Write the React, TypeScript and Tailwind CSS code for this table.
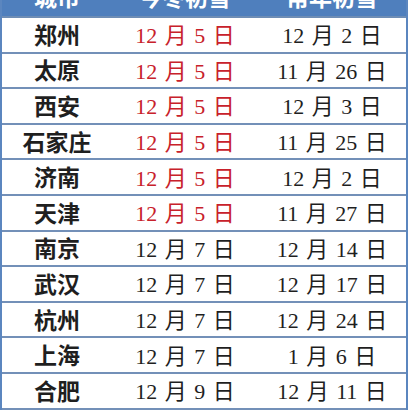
const rows: [string, string, string, boolean][] = [
  ["郑州", "12 月 5 日", "12 月 2 日", true],
  ["太原", "12 月 5 日", "11 月 26 日", true],
  ["西安", "12 月 5 日", "12 月 3 日", true],
  ["石家庄", "12 月 5 日", "11 月 25 日", true],
  ["济南", "12 月 5 日", "12 月 2 日", true],
  ["天津", "12 月 5 日", "11 月 27 日", true],
  ["南京", "12 月 7 日", "12 月 14 日", false],
  ["武汉", "12 月 7 日", "12 月 17 日", false],
  ["杭州", "12 月 7 日", "12 月 24 日", false],
  ["上海", "12 月 7 日", "1 月 6 日", false],
  ["合肥", "12 月 9 日", "12 月 11 日", false],
];

const font = { fontFamily: '"Liberation Serif", "Noto Sans CJK SC", serif' };

export default function App() {
  return (
    <div className="w-[410px] h-[410px] overflow-hidden bg-white" style={font}>
      <div className="w-[408px] border-x-2 border-[#5b86bf]">
        {/* header row, its top half runs off the picture */}
        <div className="mt-[-18px] h-[36px] grid grid-cols-[110px_146px_1fr] items-center bg-[#4f7fbd] text-white font-bold text-[23px] border-b-2 border-[#6e8db5]">
          <div className="text-center">城市</div>
          <div className="text-center">今冬初雪</div>
          <div className="text-center">常年初雪</div>
        </div>
        {rows.map(([city, now, usual, red]) => (
          <div
            key={city}
            className="h-[35.6px] grid grid-cols-[110px_146px_1fr] items-center border-b-2 border-[#7390b8] text-[22px] text-[#1f1f1f] [word-spacing:2px]"
          >
            <div className="text-center font-bold text-[23px] leading-none pt-[3px]">{city}</div>
            <div className={red ? "text-center leading-none pt-[3px] text-[#c8212b]" : "text-center leading-none pt-[3px]"}>{now}</div>
            <div className="text-center leading-none pt-[3px]">{usual}</div>
          </div>
        ))}
      </div>
    </div>
  );
}
